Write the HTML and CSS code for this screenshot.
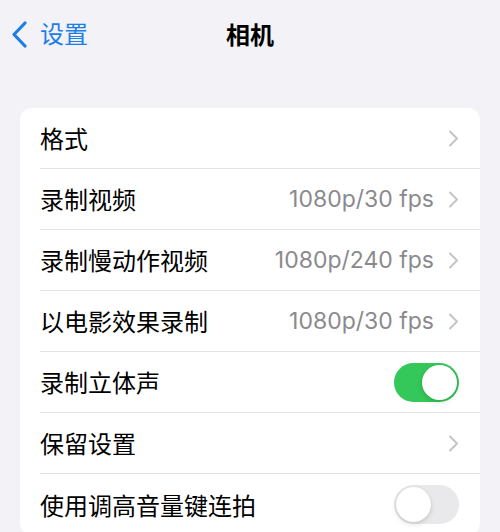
FILE: index.html
```html
<!DOCTYPE html>
<html lang="zh-CN">
<head>
<meta charset="utf-8">
<title>相机</title>
<link rel="stylesheet" href="styles.css">
</head>
<body>
<div class="page">
  <header class="nav">
    <a class="back">
      <svg class="back-icon" width="17" height="27" viewBox="0 0 17 27"><path d="M14 2 L3 13.5 L14 25" fill="none" stroke="#1d7ee6" stroke-width="3.2" stroke-linecap="round" stroke-linejoin="round"/></svg>
      <span class="back-text">设置</span>
    </a>
    <div class="title">相机</div>
    <div></div>
  </header>

  <section class="card">
    <div class="row">
      <span class="label">格式</span>
      <span class="chev"><svg width="11" height="17" viewBox="0 0 11 17"><path d="M2 1.5 L9 8.5 L2 15.5" fill="none" stroke="#c4c4c7" stroke-width="2" stroke-linecap="round" stroke-linejoin="round"/></svg></span>
    </div>
    <div class="row">
      <span class="label">录制视频</span>
      <span class="value">1080p/30 fps</span>
      <span class="chev"><svg width="11" height="17" viewBox="0 0 11 17"><path d="M2 1.5 L9 8.5 L2 15.5" fill="none" stroke="#c4c4c7" stroke-width="2" stroke-linecap="round" stroke-linejoin="round"/></svg></span>
    </div>
    <div class="row">
      <span class="label">录制慢动作视频</span>
      <span class="value">1080p/240 fps</span>
      <span class="chev"><svg width="11" height="17" viewBox="0 0 11 17"><path d="M2 1.5 L9 8.5 L2 15.5" fill="none" stroke="#c4c4c7" stroke-width="2" stroke-linecap="round" stroke-linejoin="round"/></svg></span>
    </div>
    <div class="row">
      <span class="label">以电影效果录制</span>
      <span class="value">1080p/30 fps</span>
      <span class="chev"><svg width="11" height="17" viewBox="0 0 11 17"><path d="M2 1.5 L9 8.5 L2 15.5" fill="none" stroke="#c4c4c7" stroke-width="2" stroke-linecap="round" stroke-linejoin="round"/></svg></span>
    </div>
    <div class="row">
      <span class="label">录制立体声</span>
      <span class="toggle on"><span class="knob"></span></span>
    </div>
    <div class="row">
      <span class="label">保留设置</span>
      <span class="chev"><svg width="11" height="17" viewBox="0 0 11 17"><path d="M2 1.5 L9 8.5 L2 15.5" fill="none" stroke="#c4c4c7" stroke-width="2" stroke-linecap="round" stroke-linejoin="round"/></svg></span>
    </div>
    <div class="row">
      <span class="label">使用调高音量键连拍</span>
      <span class="toggle off"><span class="knob"></span></span>
    </div>
  </section>
</div>
</body>
</html>
```

FILE: styles.css
```css
html, body {
  margin: 0;
  padding: 0;
}
body {
  background: #f2f2f7;
  font-family: Inter, "Noto Sans CJK SC", sans-serif;
  color: #000;
  width: 500px;
  height: 532px;
  overflow: hidden;
}
.page {
  display: flex;
  flex-direction: column;
}
.nav {
  height: 68px;
  display: grid;
  grid-template-columns: 1fr auto 1fr;
  align-items: center;
}
.back {
  display: flex;
  align-items: center;
  gap: 12px;
  padding-left: 11px;
  color: #1d7ee6;
  font-size: 24px;
  font-family: "Noto Sans CJK SC", sans-serif;
}
.back-icon {
  display: block;
}
.back-text {
  line-height: 1;
  padding-bottom: 2px;
}
.title {
  font-family: "Noto Sans CJK SC", sans-serif;
  font-weight: 700;
  font-size: 24px;
  line-height: 1;
}
.card {
  margin: 40px 20px 0;
  background: #fff;
  border-radius: 12px;
  overflow: hidden;
}
.row {
  height: 61px;
  margin-left: 20px;
  padding-right: 21px;
  display: flex;
  align-items: center;
  border-bottom: 1px solid #e3e3e6;
  box-sizing: border-box;
}
.row:last-child {
  border-bottom: none;
}
.label {
  flex: 1;
  font-family: "Noto Sans CJK SC", sans-serif;
  font-size: 24px;
  line-height: 1;
}
.value {
  font-size: 23px;
  color: #8a8a8e;
  margin-right: 14px;
  line-height: 1;
}
.chev {
  display: flex;
  align-items: center;
}
.chev svg {
  display: block;
}
.toggle {
  width: 65px;
  height: 39px;
  border-radius: 20px;
  display: flex;
  align-items: center;
  padding: 2px;
  box-sizing: border-box;
}
.toggle.on {
  background: #34c759;
  justify-content: flex-end;
}
.toggle.off {
  background: #e9e9eb;
  justify-content: flex-start;
}
.knob {
  width: 35px;
  height: 35px;
  border-radius: 50%;
  background: #fff;
  box-shadow: 0 2px 5px rgba(0,0,0,0.15), 0 0 1px rgba(0,0,0,0.1);
}
```
